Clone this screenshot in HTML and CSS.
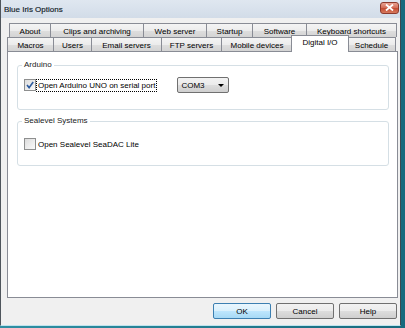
FILE: index.html
```html
<!DOCTYPE html>
<html>
  <head>
    <title>Blue Iris Options</title>
    <link rel="stylesheet" href="styles.css">
  </head>
  <body>
    <div class="screen">
      <div class="window">
        <div class="titlebar">
          <span class="title">Blue Iris Options</span>
          <span class="close-button">
            <svg width="9" height="7" viewBox="0 0 9 7">
              <path d="M1 0.5 L8 6.5 M8 0.5 L1 6.5" stroke="#fff" stroke-width="1.8"/>
            </svg>
          </span>
        </div>

        <div class="client">
          <div class="tab-row row-top">
            <div class="tab tab-about">About</div>
            <div class="tab tab-clips">Clips and archiving</div>
            <div class="tab tab-web">Web server</div>
            <div class="tab tab-startup">Startup</div>
            <div class="tab tab-software">Software</div>
            <div class="tab tab-keyboard">Keyboard shortcuts</div>
          </div>
          <div class="tab-row row-bottom">
            <div class="tab tab-macros">Macros</div>
            <div class="tab tab-users">Users</div>
            <div class="tab tab-email">Email servers</div>
            <div class="tab tab-ftp">FTP servers</div>
            <div class="tab tab-mobile">Mobile devices</div>
            <div class="tab tab-digital selected">Digital I/O</div>
            <div class="tab tab-schedule">Schedule</div>
          </div>

          <div class="panel">
            <fieldset class="group group-arduino">
              <legend>Arduino</legend>
              <div class="option-row">
                <span class="check">
                  <svg width="10" height="10" viewBox="0 0 10 10">
                    <path d="M2 5 L4.1 7.6 L8.2 2" fill="none" stroke="#2c5a9e" stroke-width="1.6"/>
                  </svg>
                </span>
                <span class="option-label focused">Open Arduino UNO on serial port</span>
                <div class="combo">
                  <span class="combo-text">COM3</span>
                  <span class="combo-arrow"></span>
                </div>
              </div>
            </fieldset>

            <fieldset class="group group-sealevel">
              <legend>Sealevel Systems</legend>
              <div class="option-row">
                <span class="check"></span>
                <span class="option-label">Open Sealevel SeaDAC Lite</span>
              </div>
            </fieldset>
          </div>

          <div class="buttons">
            <button class="dialog-button default">OK</button>
            <button class="dialog-button">Cancel</button>
            <button class="dialog-button">Help</button>
          </div>
        </div>
      </div>
    </div>
  </body>
</html>
```

FILE: styles.css
```css
body {
  margin: 0;
  font-family: "Liberation Sans", Arial, sans-serif;
  font-size: 8px;
  color: #000;
}
.screen {
  width: 405px;
  height: 328px;
  background: linear-gradient(to right, #2f8fa3, #176a7e);
  overflow: hidden;
}
.window {
  width: 401px;
  height: 326px;
  box-sizing: border-box;
  border-left: 1px solid #4f555c;
  border-right: 1px solid #3b4a52;
  border-bottom: 1px solid #bfe4ee;
  background-color: #f0f0f0;
}
.titlebar {
  height: 18px;
  display: flex;
  align-items: center;
  justify-content: space-between;
  background: linear-gradient(#dfe7f0, #d2dce8);
}
.title {
  margin-left: 3px;
  font-size: 8px;
  color: #111a28;
  -webkit-text-stroke: 0.15px #111a28;
}
.close-button {
  width: 19px;
  height: 12px;
  margin-right: 1px;
  margin-top: -3px;
  display: flex;
  align-items: center;
  justify-content: center;
  border: 1px solid #8d3b2e;
  border-radius: 3px;
  box-sizing: border-box;
  background: linear-gradient(#e9a392, #d26a55 50%, #c24a31 51%, #d77a5e);
}
.client {
  padding: 5px 2px 0 6px;
}
.tab-row {
  display: flex;
  height: 14px;
}
.row-top {
  margin-left: 2px;
}
.tab {
  height: 14px;
  box-sizing: border-box;
  margin-right: -1px;
  border: 1px solid #898c95;
  border-bottom: none;
  display: flex;
  align-items: center;
  justify-content: center;
  padding-top: 1px;
  white-space: nowrap;
  background: linear-gradient(#f4f4f4, #ececec 50%, #dedede 51%, #d4d4d4);
}
.tab.selected {
  height: 17px;
  margin-top: -2px;
  margin-left: -1px;
  margin-right: -2px;
  align-items: flex-start;
  padding-top: 2px;
  background: #fff;
  position: relative;
  z-index: 1;
}
.tab-about { width: 42px; }
.tab-clips { width: 94px; }
.tab-web { width: 64px; }
.tab-startup { width: 47px; }
.tab-software { width: 55px; }
.tab-keyboard { width: 91px; }
.tab-macros { width: 47px; }
.tab-users { width: 39px; }
.tab-email { width: 71px; }
.tab-ftp { width: 61px; }
.tab-mobile { width: 72px; }
.tab-digital { width: 58px; }
.tab-schedule { width: 49px; }

.panel {
  width: 391px;
  height: 247px;
  box-sizing: border-box;
  border: 1px solid #898c95;
  background-color: #fff;
  padding: 8px 8px 0 9px;
}
.group {
  margin: 0;
  border: 1px solid #d5dfe5;
  border-radius: 3px;
  padding: 7px 0 16px 5px;
  min-width: 0;
}
.group legend {
  padding: 0 2px;
  margin-left: -1px;
  line-height: 10px;
  font-size: 8px;
  color: #1a1a1a;
}
.group-sealevel {
  margin-top: 6px;
  padding: 10px 0 13px 5px;
}
.option-row {
  display: flex;
  align-items: center;
  height: 16px;
}
.check {
  width: 12px;
  height: 12px;
  margin-left: 1px;
  box-sizing: border-box;
  border: 1px solid #8e8f8f;
  background: linear-gradient(135deg, #dcdcdc, #fbfbfb);
  display: flex;
  align-items: center;
  justify-content: center;
}
.option-label {
  height: 13px;
  box-sizing: border-box;
  border: 1px dotted transparent;
  padding: 0 1px;
  line-height: 11px;
  white-space: nowrap;
}
.option-label.focused {
  border-color: #000;
}
.combo {
  width: 52px;
  height: 16px;
  margin-left: 20px;
  box-sizing: border-box;
  border: 1px solid #707070;
  border-radius: 2px;
  background: linear-gradient(#f2f2f2, #ebebeb 50%, #dddddd 51%, #cfcfcf);
  display: flex;
  align-items: center;
  justify-content: space-between;
  padding: 0 4px 0 3px;
}
.combo-arrow {
  width: 0;
  height: 0;
  border-left: 3px solid transparent;
  border-right: 3px solid transparent;
  border-top: 3px solid #000;
}
.buttons {
  display: flex;
  justify-content: flex-end;
  gap: 5px;
  margin-top: 5px;
  margin-right: 1px;
}
.dialog-button {
  width: 58px;
  height: 16px;
  padding: 0;
  font-family: "Liberation Sans", Arial, sans-serif;
  font-size: 8px;
  color: #000;
  border: 1px solid #707070;
  border-radius: 2px;
  background: linear-gradient(#f2f2f2, #ebebeb 50%, #dddddd 51%, #cfcfcf);
}
.dialog-button.default {
  border-color: #3c7fb1;
  background: linear-gradient(#eaf6fd, #d9f0fc 50%, #bee6fd 51%, #a7d9f5);
}
```
